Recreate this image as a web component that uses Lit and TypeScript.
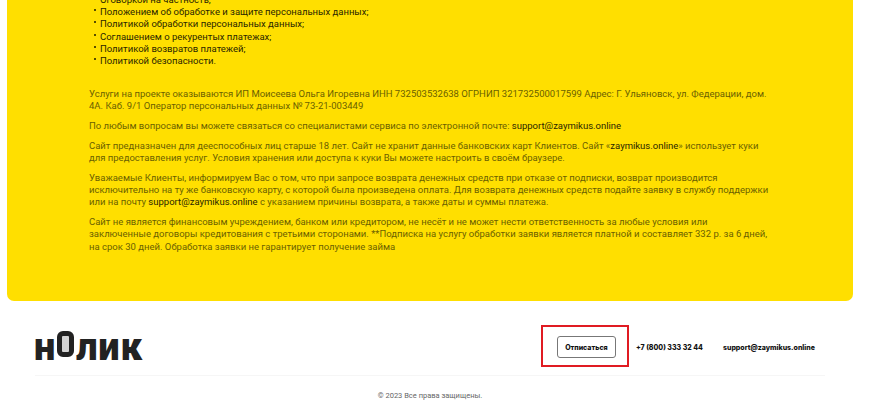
import { LitElement, html, css } from "lit";
import { customElement } from "lit/decorators.js";

@customElement("app-root")
export class AppRoot extends LitElement {
  static styles = css`
    :host {
      display: block;
      position: relative;
      width: 870px;
      height: 411px;
      overflow: hidden;
      background: #fff;
      font-family: Roboto, "Noto Sans", sans-serif;
    }
    .card {
      margin: -6px 17px 0 7px;
      height: 307px;
      box-sizing: border-box;
      background: #ffdf00;
      border-radius: 0 0 7px 7px;
      padding: 0 83px 0 82px;
      font-size: 9.5px;
      line-height: 12.2px;
      color: #6b5f00;
    }
    ul {
      margin: 0 0 21px;
      padding: 0 0 0 11px;
      list-style: none;
      color: #2a2600;
    }
    li {
      position: relative;
    }
    li.item::before {
      content: "";
      position: absolute;
      left: -6px;
      top: 3px;
      width: 2px;
      height: 2px;
      border-radius: 50%;
      background: #1f1c00;
    }
    p {
      margin: 0 0 7.6px;
    }
    b {
      font-weight: 400;
      color: #2a2600;
    }
    footer {
      padding: 0 45px 0 35px;
    }
    .row {
      display: flex;
      align-items: center;
      height: 60px;
      padding: 14px 10px 0 0;
      border-bottom: 1px solid #f6f6f6;
    }
    .logo {
      display: flex;
      align-items: center;
      font-weight: 900;
      font-size: 38px;
      line-height: 30px;
      color: #222;
      letter-spacing: 0.8px;
      margin: 4px 0 0 -1px;
    }
    .zero {
      display: inline-block;
      box-sizing: border-box;
      width: 17px;
      height: 26px;
      margin: -7px 2px 0 1px;
      border: 5px solid #222;
      border-radius: 6px;
      background: #d4d4d4;
      color: transparent;
      font-size: 1px;
      line-height: 1px;
      overflow: hidden;
    }
    .contacts {
      margin-left: auto;
      display: flex;
      align-items: center;
      font-family: Inter, sans-serif;
      font-weight: 800;
      font-size: 7px;
      color: #111;
      margin-top: 4px;
    }
    .btn {
      width: 59px;
      height: 22px;
      box-sizing: border-box;
      border: 1px solid #777;
      border-radius: 3px;
      background: #fff;
      display: flex;
      align-items: center;
      justify-content: center;
      margin-right: 20px;
      font: inherit;
      color: inherit;
      padding: 0;
    }
    .phone {
      margin-right: 20px;
    }
    .copy {
      text-align: center;
      font-size: 7.5px;
      color: #666;
      margin-top: 15px;
      line-height: 10px;
    }
    .mark {
      position: absolute;
      left: 541px;
      top: 325px;
      width: 88px;
      height: 42px;
      box-sizing: border-box;
      border: 2px solid #e01b22;
      pointer-events: none;
    }
  `;

  render() {
    return html`
      <div class="card">
        <ul>
          <li>Оговоркой на частность;</li>
          <li class="item">Положением об обработке и защите персональных данных;</li>
          <li class="item">Политикой обработки персональных данных;</li>
          <li class="item">Соглашением о рекурентых платежах;</li>
          <li class="item">Политикой возвратов платежей;</li>
          <li class="item">Политикой безопасности.</li>
        </ul>
        <p>Услуги на проекте оказываются ИП Моисеева Ольга Игоревна ИНН 732503532638 ОГРНИП 321732500017599 Адрес: Г. Ульяновск, ул. Федерации, дом. 4А. Каб. 9/1 Оператор персональных данных № 73-21-003449</p>
        <p>По любым вопросам вы можете связаться со специалистами сервиса по электронной почте: <b>support@zaymikus.online</b></p>
        <p>Сайт предназначен для дееспособных лиц старше 18 лет. Сайт не хранит данные банковских карт Клиентов. Сайт «<b>zaymikus.online</b>» использует куки для предоставления услуг. Условия хранения или доступа к куки Вы можете настроить в своём браузере.</p>
        <p>Уважаемые Клиенты, информируем Вас о том, что при запросе возврата денежных средств при отказе от подписки, возврат производится исключительно на ту же банковскую карту, с которой была произведена оплата. Для возврата денежных средств подайте заявку в службу поддержки или на почту <b>support@zaymikus.online</b> с указанием причины возврата, а также даты и суммы платежа.</p>
        <p>Сайт не является финансовым учреждением, банком или кредитором, не несёт и не может нести ответственность за любые условия или заключенные договоры кредитования с третьими сторонами. **Подписка на услугу обработки заявки является платной и составляет 332 р. за 6 дней, на срок 30 дней. Обработка заявки не гарантирует получение займа</p>
      </div>
      <footer>
        <div class="row">
          <div class="logo">н<span class="zero">О</span>лик</div>
          <div class="contacts">
            <button class="btn">Отписаться</button>
            <span class="phone">+7 (800) 333 32 44</span>
            <span>support@zaymikus.online</span>
          </div>
        </div>
        <div class="copy">© 2023 Все права защищены.</div>
      </footer>
      <div class="mark"></div>
    `;
  }
}
